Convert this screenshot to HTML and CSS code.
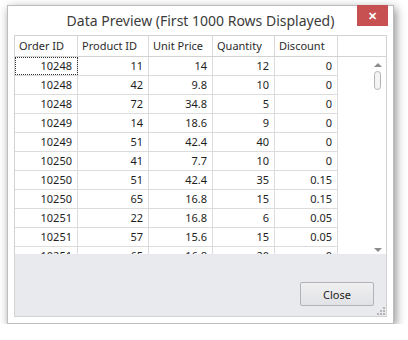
FILE: index.html
```html
<!DOCTYPE html>
<html lang="en">
<head>
  <meta charset="UTF-8" />
  <title>Data Preview</title>
  <link rel="stylesheet" href="styles.css">
</head>
<body>
  <div class="window">
    <div class="titlebar">
      <span class="title">Data Preview (First 1000 Rows Displayed)</span>
      <div class="close-x">&#x2715;</div>
    </div>

    <div class="frame">
      <!-- header -->
      <div class="head">
        <div class="hcell">Order ID</div>
        <div class="hcell">Product ID</div>
        <div class="hcell">Unit Price</div>
        <div class="hcell">Quantity</div>
        <div class="hcell">Discount</div>
        <div class="hcell last"></div>
      </div>

      <!-- rows + scrollbar -->
      <div class="body">
        <div class="rows" id="rows"></div>
        <div class="scroll-col">
          <div class="scrollbar">
            <div class="arrow up"></div>
            <div class="thumb"></div>
            <div class="track"></div>
            <div class="arrow down"></div>
          </div>
        </div>
      </div>

      <!-- bottom panel -->
      <div class="panel">
        <button class="close-btn">Close</button>
        <div class="grip">
          <span></span><span></span><span></span>
          <span></span><span></span><span></span>
        </div>
      </div>
    </div>
  </div>

  <script>
    const data = [
      [10248, 11, 14, 12, 0],
      [10248, 42, 9.8, 10, 0],
      [10248, 72, 34.8, 5, 0],
      [10249, 14, 18.6, 9, 0],
      [10249, 51, 42.4, 40, 0],
      [10250, 41, 7.7, 10, 0],
      [10250, 51, 42.4, 35, 0.15],
      [10250, 65, 16.8, 15, 0.15],
      [10251, 22, 16.8, 6, 0.05],
      [10251, 57, 15.6, 15, 0.05],
      [10251, 65, 16.8, 20, 0]
    ];

    const rowsEl = document.getElementById('rows');
    data.forEach((r, i) => {
      const row = document.createElement('div');
      row.className = 'row';
      r.forEach((v, j) => {
        const c = document.createElement('div');
        c.className = 'cell';
        if (i === 0 && j === 0) c.classList.add('focus');
        c.textContent = v;
        row.appendChild(c);
      });
      rowsEl.appendChild(row);
    });
  </script>
</body>
</html>
```

FILE: styles.css
```css
body {
  margin: 0;
  background: #fff;
  font-family: "Noto Sans", "Open Sans", sans-serif;
}

.window {
  margin: 5px 0 0 7px;
  width: 387px;
  height: 319px;
  box-sizing: border-box;
  border: 1px solid #bdbdbd;
  background: #fff;
  box-shadow: 2px 3px 9px rgba(0, 0, 0, 0.45);
  padding: 0 6px 6px 6px;
  display: flex;
  flex-direction: column;
  position: relative;
}

.titlebar {
  height: 29px;
  display: flex;
  align-items: center;
  justify-content: center;
}

.title {
  font-size: 14px;
  color: #3c3c3c;
  margin-top: -1px;
}

.close-x {
  position: absolute;
  top: -1px;
  right: 5px;
  width: 31px;
  height: 21px;
  background: #c75050;
  color: #fff;
  font-size: 11px;
  font-weight: bold;
  display: flex;
  align-items: center;
  justify-content: center;
}

.frame {
  flex: 1;
  border: 1px solid #d3d3d3;
  display: flex;
  flex-direction: column;
  font-size: 11px;
  color: #1e1e1e;
}

.head {
  display: flex;
  height: 21px;
  box-sizing: border-box;
  border-bottom: 1px solid #d3d3d3;
}

.hcell {
  box-sizing: border-box;
  border-right: 1px solid #d9d9d9;
  padding-left: 4px;
  line-height: 20px;
  color: #2b2b2b;
}

.hcell.last {
  border-right: none;
  flex: 1;
}

.hcell:nth-child(1), .cell:nth-child(1) { width: 63px; }
.hcell:nth-child(2), .cell:nth-child(2) { width: 71px; }
.hcell:nth-child(3), .cell:nth-child(3) { width: 64px; }
.hcell:nth-child(4), .cell:nth-child(4) { width: 62px; }
.hcell:nth-child(5), .cell:nth-child(5) { width: 63px; }

.body {
  display: flex;
  height: 197px;
  overflow: hidden;
}

.rows {
  width: 323px;
}

.row {
  display: flex;
  height: 19px;
  box-sizing: border-box;
  border-bottom: 1px solid #dcdcdc;
}

.cell {
  box-sizing: border-box;
  border-right: 1px solid #dcdcdc;
  text-align: right;
  padding-right: 5px;
  line-height: 18px;
}

.cell.focus {
  outline: 1px dotted #333;
  outline-offset: -1px;
}

.scroll-col {
  flex: 1;
  display: flex;
  justify-content: flex-end;
}

.scrollbar {
  width: 17px;
  display: flex;
  flex-direction: column;
  align-items: center;
  padding-top: 6px;
  padding-bottom: 2px;
  box-sizing: border-box;
}

.arrow {
  width: 0;
  height: 0;
  border-left: 4px solid transparent;
  border-right: 4px solid transparent;
}

.arrow.up {
  border-bottom: 4px solid #8c8c8c;
}

.arrow.down {
  border-top: 4px solid #8c8c8c;
}

.thumb {
  margin-top: 4px;
  width: 7px;
  height: 19px;
  box-sizing: border-box;
  border: 1px solid #b4b4b4;
  border-radius: 4px;
  background: #f4f4f4;
}

.track {
  flex: 1;
}

.panel {
  flex: 1;
  background: #e9eaee;
  display: flex;
  justify-content: flex-end;
  align-items: flex-end;
  padding: 0 12px 10px 0;
  position: relative;
}

.close-btn {
  width: 74px;
  height: 24px;
  font-family: "Noto Sans", "Open Sans", sans-serif;
  font-size: 11px;
  color: #222;
  background: linear-gradient(#f0f0f1, #e1e2e5);
  border: 1px solid #b1b3b8;
  border-radius: 2px;
  padding: 0;
}

.grip {
  position: absolute;
  right: 1px;
  bottom: 1px;
  width: 8px;
  height: 8px;
  display: grid;
  grid-template-columns: repeat(3, 2px);
  grid-template-rows: repeat(3, 2px);
  gap: 1px;
}

.grip span {
  background: #b5b5b5;
}

.grip span:nth-child(1) { grid-column: 3; grid-row: 1; }
.grip span:nth-child(2) { grid-column: 2; grid-row: 2; }
.grip span:nth-child(3) { grid-column: 3; grid-row: 2; }
.grip span:nth-child(4) { grid-column: 1; grid-row: 3; }
.grip span:nth-child(5) { grid-column: 2; grid-row: 3; }
.grip span:nth-child(6) { grid-column: 3; grid-row: 3; }
```
